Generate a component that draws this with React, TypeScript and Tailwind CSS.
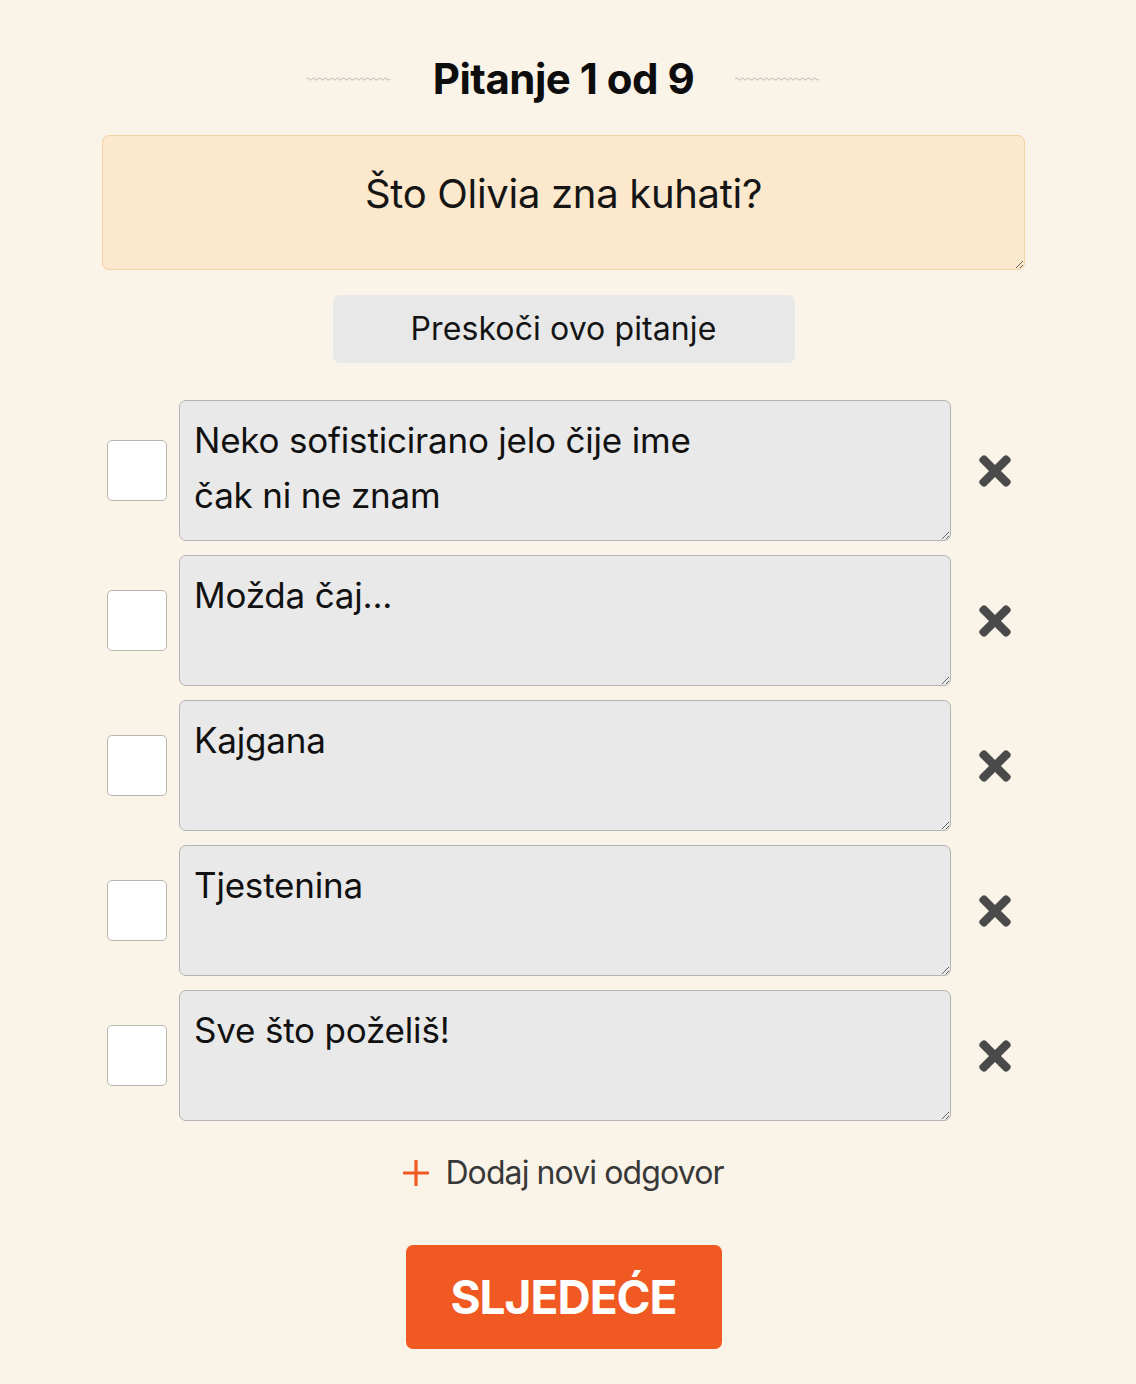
import { useState } from "react";
import { FaTimes } from "react-icons/fa";

const font = { fontFamily: "Inter, Roboto, 'Noto Sans', sans-serif" };

const initialAnswers = [
  "Neko sofisticirano jelo čije ime\nčak ni ne znam",
  "Možda čaj...",
  "Kajgana",
  "Tjestenina",
  "Sve što poželiš!",
];

function Wavy() {
  return (
    <svg width="86" height="6" viewBox="0 0 86 6" className="block">
      <path
        d="M0 3 q1.5 -2 3 0 t3 0 t3 0 t3 0 t3 0 t3 0 t3 0 t3 0 t3 0 t3 0 t3 0 t3 0 t3 0 t3 0 t3 0 t3 0 t3 0 t3 0 t3 0 t3 0 t3 0 t3 0 t3 0 t3 0 t3 0 t3 0 t3 0 t3 0"
        fill="none"
        stroke="#c9c4bd"
        strokeWidth="1.2"
      />
    </svg>
  );
}

function AnswerRow({ value, first }: { value: string; first: boolean }) {
  const [text, setText] = useState(value);
  return (
    <div className="flex items-center">
      <div className="ml-[5px] h-[61px] w-[60px] shrink-0 rounded-[5px] border border-[#b9b6b1] bg-white" />
      <textarea
        value={text}
        onChange={(e) => setText(e.target.value)}
        className={
          "ml-[12px] w-[772px] shrink-0 rounded-[7px] border-[1.5px] border-[#b3b3b3] bg-[#e9e9e9] px-[14px] pt-[12px] text-[35px] leading-[55px] tracking-[-0.2px] text-[#111] outline-none " +
          (first ? "h-[141px]" : "h-[131px]")
        }
        style={font}
      />
      <button className="ml-[27px] flex h-[34px] w-[34px] items-center justify-center text-[#4a4a4a]">
        <FaTimes size={46} />
      </button>
    </div>
  );
}

export default function App() {
  const [question, setQuestion] = useState("Što Olivia zna kuhati?");

  return (
    <div className="min-h-[1384px] w-full bg-[#faf3e8]" style={font}>
      <div className="ml-[102px] flex w-[923px] flex-col pt-[55px]">
        <div className="flex h-[48px] items-center justify-center">
          <Wavy />
          <h1 className="mx-[41px] text-[42px] font-bold leading-[48px] tracking-[-0.5px] text-[#0d0d0d]">Pitanje 1 od 9</h1>
          <Wavy />
        </div>

        <textarea
          value={question}
          onChange={(e) => setQuestion(e.target.value)}
          className="mt-[32px] h-[135px] w-full rounded-[7px] border-[1.5px] border-[#f3d2a6] bg-[#fbe8cd] px-4 pt-[34px] text-center text-[40px] leading-[48px] tracking-[-0.3px] text-[#151515] outline-none"
          style={font}
        />

        <div className="mt-[25px] flex justify-center">
          <button className="h-[68px] w-[462px] rounded-[7px] bg-[#e8e8e8] text-[32px] tracking-[0.1px] text-[#141414]">
            Preskoči ovo pitanje
          </button>
        </div>

        <div className="mt-[37px] flex flex-col gap-[14px]">
          {initialAnswers.map((a, i) => (
            <AnswerRow key={i} value={a} first={i === 0} />
          ))}
        </div>

        <div className="mt-[32px] flex items-center justify-center">
          <button className="flex items-center gap-[16px] text-[32px] leading-[40px] tracking-[-0.9px] text-[#383838]">
            <svg width="26" height="26" viewBox="0 0 26 26">
              <path d="M13 1v24M1 13h24" stroke="#ee5a22" strokeWidth="3.2" strokeLinecap="round" />
            </svg>
            Dodaj novi odgovor
          </button>
        </div>

        <div className="mt-[52px] flex justify-center">
          <button className="h-[104px] w-[316px] rounded-[7px] bg-[#f05a22] text-[46px] font-bold tracking-[-1px] text-white">
            SLJEDEĆE
          </button>
        </div>
      </div>
    </div>
  );
}
